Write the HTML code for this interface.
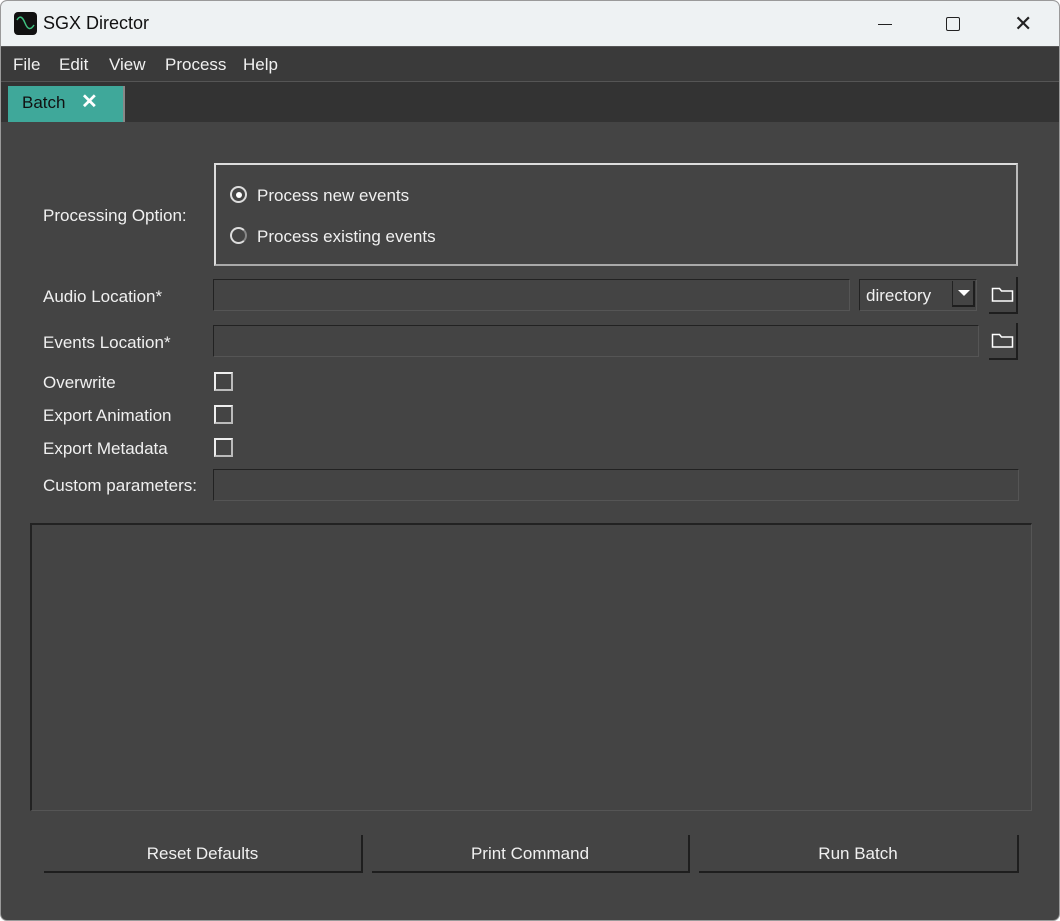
<!DOCTYPE html>
<html><head><style>
body{margin:0;width:1060px;height:921px;overflow:hidden;background:#fff;font-family:"Liberation Sans",sans-serif;}
.win{position:absolute;left:0;top:0;width:1058px;height:919px;border:1px solid #9a9a9a;border-radius:7px;overflow:hidden;background:#444;}
.abs{position:absolute}
.t{color:#f0f0f0;font-size:17px;position:absolute}
.inp{position:absolute;background:#444;border-top:1px solid #222;border-left:1px solid #222;border-bottom:1px solid #555;border-right:1px solid #555;box-sizing:border-box}
.cb{position:absolute;width:19px;height:19px;border:2px solid #eee;box-sizing:border-box;border-right-color:#bbb;border-bottom-color:#bbb}
.btn{position:absolute;height:38px;border-right:2px solid #1e1e1e;border-bottom:2px solid #1e1e1e;box-sizing:border-box;color:#f0f0f0;font-size:17px;text-align:center;line-height:38px}
</style></head><body>
<div class="win">
<div class="abs" style="left:0;top:0;width:1058px;height:45px;background:#eef2f3;"></div>
<div class="abs" style="left:13px;top:11px;width:23px;height:23px;background:#111;border-radius:4px"><svg width="23" height="23"><path d="M3 8 Q7 1 11 11 Q15 21 20 13" stroke="#3fbf7f" stroke-width="1.5" fill="none"/></svg></div>
<div class="abs" style="left:42px;top:12px;font-size:18px;color:#111">SGX Director</div>
<div class="abs" style="left:877px;top:23px;width:14px;height:1px;background:#222"></div>
<div class="abs" style="left:945px;top:16px;width:12px;height:12px;border:1.5px solid #222;border-radius:2px"></div>
<div class="abs" style="left:1013px;top:10px;font-size:22px;color:#222">✕</div>
<div class="abs" style="left:0;top:45px;width:1058px;height:34px;background:#3a3a3a;border-top:1px solid #555;border-bottom:2px solid #555"></div>
<div class="t" style="left:12px;top:54px">File</div>
<div class="t" style="left:58px;top:54px">Edit</div>
<div class="t" style="left:108px;top:54px">View</div>
<div class="t" style="left:164px;top:54px">Process</div>
<div class="t" style="left:242px;top:54px">Help</div>
<div class="abs" style="left:0;top:81px;width:1058px;height:40px;background:#333"></div>
<div class="abs" style="left:7px;top:85px;width:115px;height:36px;background:#3fa89a;border-right:2px solid #888"></div>
<div class="abs" style="left:21px;top:92px;font-size:17px;color:#111">Batch</div>
<div class="abs" style="left:80px;top:88px;font-size:20px;color:#fff;font-weight:bold">✕</div>
<div class="t" style="left:42px;top:205px">Processing Option:</div>
<div class="abs" style="left:213px;top:162px;width:804px;height:103px;border:2px solid #ddd;box-sizing:border-box;border-right-color:#bbb;border-bottom-color:#aaa"></div>
<div class="abs" style="left:229px;top:185px;width:17px;height:17px;border:2px solid #ddd;border-radius:50%;box-sizing:border-box"><div style="margin:3.5px;width:6px;height:6px;background:#fff;border-radius:50%"></div></div>
<div class="t" style="left:256px;top:185px">Process new events</div>
<div class="abs" style="left:229px;top:226px;width:17px;height:17px;border:2px solid #ddd;border-right-color:#888;border-radius:50%;box-sizing:border-box"></div>
<div class="t" style="left:256px;top:226px">Process existing events</div>
<div class="t" style="left:42px;top:286px">Audio Location*</div>
<div class="inp" style="left:212px;top:278px;width:637px;height:32px"></div>
<div class="inp" style="left:858px;top:278px;width:118px;height:32px"></div>
<div class="t" style="left:865px;top:285px">directory</div>
<div class="abs" style="left:951px;top:280px;width:23px;height:26px;border-left:1px solid #222;border-right:2px solid #1e1e1e;border-bottom:2px solid #1e1e1e;box-sizing:border-box"><div style="margin:9px 0 0 5px;width:0;height:0;border-left:6px solid transparent;border-right:6px solid transparent;border-top:6px solid #fff"></div></div>
<div class="abs" style="left:988px;top:276px;width:29px;height:37px;border-right:2px solid #1e1e1e;border-bottom:2px solid #1e1e1e;box-sizing:border-box"><svg width="29" height="37"><path d="M3.5 11.5h7l2 2.5h11v10h-20z" fill="none" stroke="#fff" stroke-width="1.5"/></svg></div>
<div class="t" style="left:42px;top:332px">Events Location*</div>
<div class="inp" style="left:212px;top:324px;width:766px;height:32px"></div>
<div class="abs" style="left:988px;top:322px;width:29px;height:37px;border-right:2px solid #1e1e1e;border-bottom:2px solid #1e1e1e;box-sizing:border-box"><svg width="29" height="37"><path d="M3.5 11.5h7l2 2.5h11v10h-20z" fill="none" stroke="#fff" stroke-width="1.5"/></svg></div>
<div class="t" style="left:42px;top:372px">Overwrite</div>
<div class="cb" style="left:213px;top:371px"></div>
<div class="t" style="left:42px;top:405px">Export Animation</div>
<div class="cb" style="left:213px;top:404px"></div>
<div class="t" style="left:42px;top:438px">Export Metadata</div>
<div class="cb" style="left:213px;top:437px"></div>
<div class="t" style="left:42px;top:475px">Custom parameters:</div>
<div class="inp" style="left:212px;top:468px;width:806px;height:32px"></div>
<div class="abs" style="left:29px;top:522px;width:1002px;height:288px;border-top:2px solid #222;border-left:2px solid #222;border-right:1px solid #555;border-bottom:1px solid #555;box-sizing:border-box"></div>
<div class="btn" style="left:43px;top:834px;width:319px">Reset Defaults</div>
<div class="btn" style="left:371px;top:834px;width:318px">Print Command</div>
<div class="btn" style="left:698px;top:834px;width:320px">Run Batch</div>
</div>
</body></html>
